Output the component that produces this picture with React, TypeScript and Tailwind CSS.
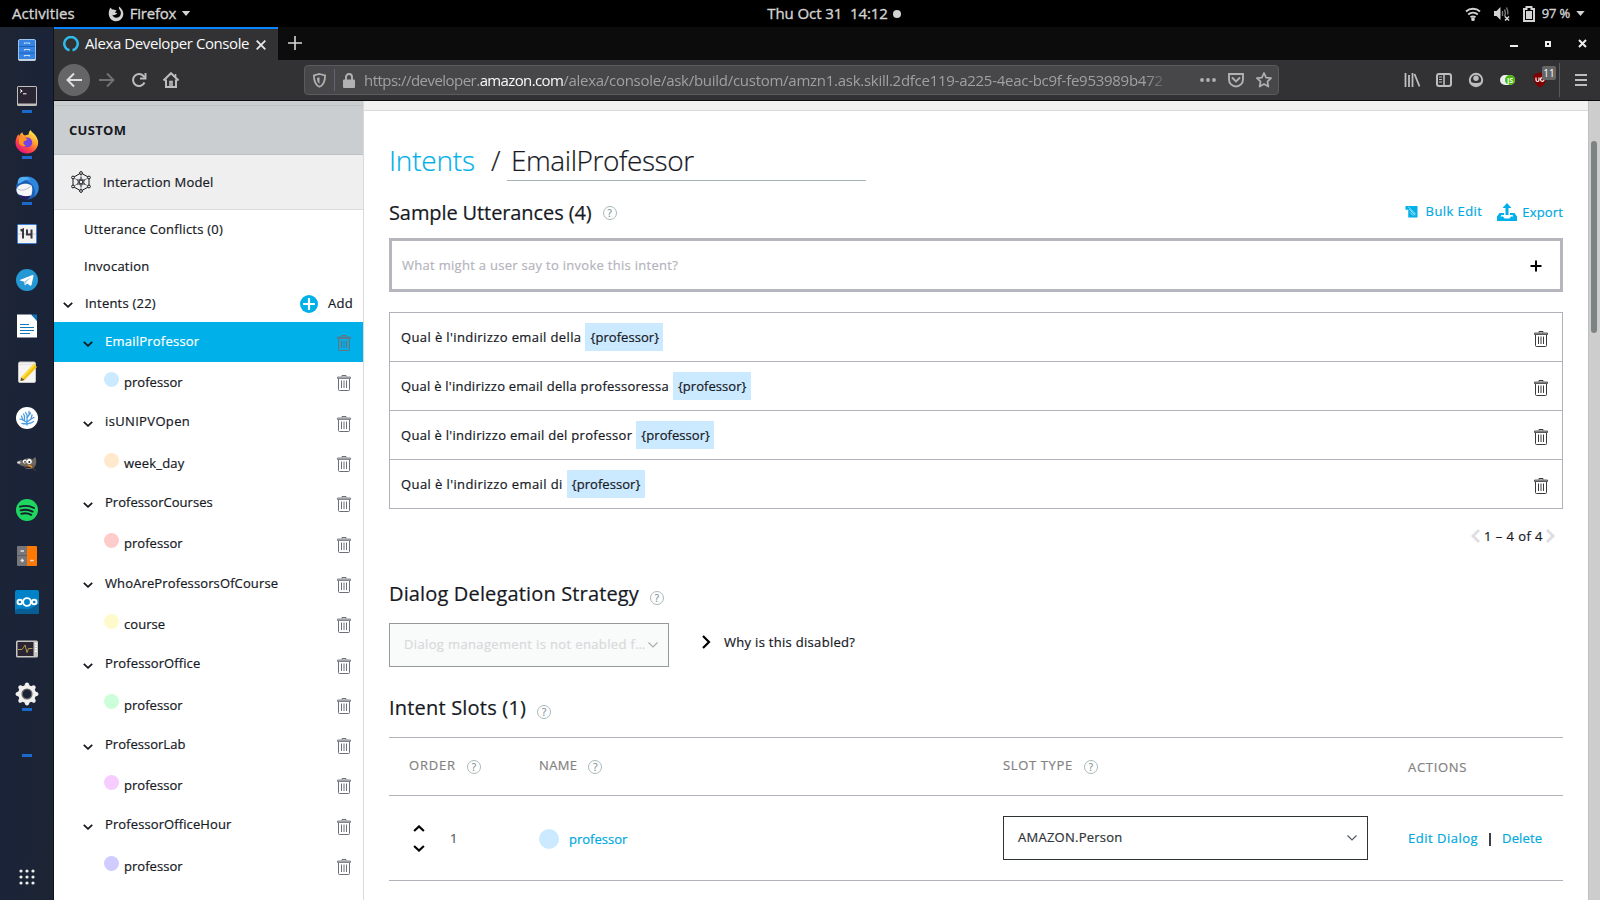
import React from "react";

type P = { className?: string };

/* ---------- small glyphs ---------- */

const Chevron = ({ className = "" }: P) => (
  <svg viewBox="0 0 10 6" className={className} fill="none" stroke="currentColor" strokeWidth="1.8">
    <path d="M0.8 0.8 5 4.8 9.2 0.8" />
  </svg>
);

const ThinChevron = ({ className = "" }: P) => (
  <svg viewBox="0 0 10 6" className={className} fill="none" stroke="currentColor" strokeWidth="1.2">
    <path d="M0.5 0.5 5 5 9.5 0.5" />
  </svg>
);

const PageArrow = ({ className = "" }: P) => (
  <svg viewBox="0 0 9 14" className={`h-[14px] w-[9px] ${className}`} fill="none" stroke="#dedee2" strokeWidth="2.8">
    <path d="M8 1 2 7l6 6" />
  </svg>
);

const Trash = ({ className = "" }: P) => (
  <svg viewBox="0 0 14 16" className={className} fill="none" stroke="currentColor">
    <path d="M5 1.500V.500h4v1" />
    <path d="M.500 2h13v1.500H.500z" strokeWidth=".8" fill="currentColor" fillOpacity=".4" />
    <path d="M1.500 4v10.500q0 1 1 1h9q1 0 1-1V4" />
    <path d="M4.500 5.500v7.500M7 5.500v7.500M9.500 5.500v7.500" strokeWidth="1" />
  </svg>
);

const Help = ({ className = "" }: P) => (
  <span
    className={`flex size-[14px] shrink-0 items-center justify-center rounded-full border border-[#a9bab8] text-[10px] leading-none text-[#879596] ${className}`}
  >
    ?
  </span>
);

/* ---------- dock ---------- */

const Files = () => (
  <svg viewBox="0 0 24 24" className="size-6">
    <rect x="3.5" y="1.5" width="17" height="21" rx="1.5" fill="#3584e4" stroke="#9ec3ea" />
    <path d="M3.5 21.8h17" stroke="#deddda" strokeWidth="1.4" />
    <path d="M4 8.5h16M4 15h16" stroke="#1c62bd" />
    <path d="M9.500 6V5h5v1M9.500 12.500v-1h5v1M9.500 18.500v-1h5v1" fill="none" stroke="#c5dcf5" strokeWidth="1.200" />
  </svg>
);
const Terminal = () => (
  <svg viewBox="0 0 24 24" className="size-6">
    <rect x="2" y="2" width="20" height="20" rx="1.5" fill="#c0bfbc" />
    <rect x="3" y="3" width="18" height="16.500" fill="#2a2433" />
    <path d="m5 5.500 2.200 1.500L5 8.500M8 9.800h3.500" fill="none" stroke="#fff" strokeWidth="1" />
  </svg>
);
const Firefox = () => (
  <svg viewBox="0 0 24 24" className="size-6">
    <defs>
      <linearGradient id="fx" x1=".85" y1=".05" x2=".25" y2=".95">
        <stop offset="0" stopColor="#fff44f" />
        <stop offset=".4" stopColor="#ffa030" />
        <stop offset=".7" stopColor="#ff4a45" />
        <stop offset="1" stopColor="#e2157a" />
      </linearGradient>
    </defs>
    <path
      d="M15.500 0c.8 2 3 3 5 5.500 1.600 2 3 5 2.600 8C22.500 19.500 17.800 23.500 12 23.500S.5 19 .5 12.800C.5 9 2 6 3.500 4c0 1 .3 1.600.8 2C5 4 6.500 2.800 7.500 2.300c0 2 1.200 2.900 2.500 3.200 1.500-.8 3-.7 3.500-.5C13.500 3 14.300 1.200 15.500 0Z"
      fill="url(#fx)"
    />
    <circle cx="12.200" cy="12.500" r="5" fill="#7542e5" />
    <path d="M4 8c3-1.500 6-.5 8.500 1.500C11 10.800 9 10.500 8.500 12c-.5 2 1.500 3.500 3 3.500-3 1.500-6.500.5-7.500-2.500Z" fill="#ff9420" />
  </svg>
);
const Thunderbird = () => (
  <svg viewBox="0 0 24 24" className="size-6">
    <circle cx="12.300" cy="12" r="11.400" fill="#1b5fb5" />
    <path d="M6 2.500C12-1 20 1 23 8c1.500 5 0 10-4 13 1.500-4 1-7 0-9.500C17 7 12 4 6 2.500Z" fill="#2f86dd" />
    <path d="M5 1.500C9 0 13 1 16 4c-3-1-6 0-9 2L3 8C2.500 5 3 3 5 1.500Z" fill="#54aef5" />
    <path d="M1.500 13c1-3 4-4.500 6.500-5 3-.5 6-.2 8.500 1.500 1.500 3 .5 8-.5 10.500-4 1.500-8 .5-13-2C1.800 16.500 1.300 14.500 1.500 13Z" fill="#f6f6f8" />
    <path d="M2.500 12.500c3 2.500 7 2.500 13-2" fill="none" stroke="#b6bccb" />
    <path d="M3.500 18.500c4 1.800 8.500 2.200 12.500.8-1 2-2.500 3.200-4 4.200-3.500 0-6.500-2-8.500-5Z" fill="#27195d" />
  </svg>
);
const Calendar = () => (
  <svg viewBox="0 0 24 24" className="size-6">
    <rect x="2.500" y="2.500" width="19" height="19" rx="1" fill="#f2f2f0" stroke="#3d7fd9" />
    <path d="M3 12h18" stroke="#cfcfcf" />
    <path d="M5.500 8.500 8 7.500v9M12 7.500v5h5.500M16.500 7.500v9" fill="none" stroke="#3a3742" strokeWidth="2" />
  </svg>
);
const Telegram = () => (
  <svg viewBox="0 0 24 24" className="size-6">
    <circle cx="12" cy="12" r="11" fill="#2498d4" />
    <path d="m4.800 12 12.700-5c.7-.2 1.100.1 1 .9L16.500 17c-.2.8-.7 1-1.400.6l-3-2.200-1.600 1.600c-.5.500-.9.200-.9-.4l-.3-2.800-4.200-1.300c-.6-.2-.7-.4-.3-.5Z" fill="#fff" />
    <path d="m9.400 13.600 7-4.800-5.200 5.400-.4 2.600Z" fill="#a9cbe0" />
  </svg>
);
const Writer = () => (
  <svg viewBox="0 0 24 24" className="size-6">
    <path d="M2 .5h14.500l5.500 6V23.500H2Z" fill="#fff" />
    <path d="M16 .5h6v6.500Z" fill="#1272b5" />
    <path d="M5 10.500h9M5 13.500h14M5 16.500h14M5 19.500h10" stroke="#1377bd" strokeWidth="1.200" />
  </svg>
);
const Editor = () => (
  <svg viewBox="0 0 24 24" className="size-6">
    <rect x="3.500" y="2" width="17" height="20.500" rx="1.500" fill="#f6f5f4" stroke="#c9c7c3" />
    <path d="M4.500 4.500h15" stroke="#d0cecb" strokeDasharray="1 1" />
    <path d="m6 17.500 13-14 3 3.500L9.500 20 5.500 21Z" fill="#f5c211" />
    <path d="m6 17.500 13-14 1.200 1.400L7.300 18.800Z" fill="#f9e04e" />
    <path d="m6 17.500 3.500 2.500-4 1Z" fill="#5b5140" />
  </svg>
);
const Coral = () => (
  <svg viewBox="0 0 24 24" className="size-6">
    <circle cx="12" cy="12" r="11" fill="#fff" />
    <g fill="none" stroke="#4a9be0" strokeWidth="1.300" strokeLinecap="round">
      <path d="M12 19V9l-1.500-2.500M12 12l2-3V5.500M12 16l4-3 1-4M16 13l3-1.500M12 16.500 8 14 6.500 10M8 14l-3-1M12 18l4-1 2.500-1.500M12 18l-5-.5M9.500 14.500V10L8.500 8M14 9l1.500-2" />
    </g>
  </svg>
);
const Gimp = () => (
  <svg viewBox="0 0 24 24" className="size-6">
    <path d="M4 8.500c2-1 3-.5 5 .2C9.500 5.500 15.500 5 17.500 7.500c1.500-2 3-2.500 3.300-2 .8 4 .5 7-.8 9-2.500 3.300-9.500 3.500-12 0L4 12.500Z" fill="#6d675f" />
    <circle cx="9.800" cy="9.500" r="2" fill="#fff" />
    <circle cx="14.300" cy="9.500" r="2.500" fill="#fff" />
    <circle cx="10" cy="9.800" r=".9" fill="#222" />
    <circle cx="14.300" cy="9.900" r="1" fill="#222" />
    <ellipse cx="3.800" cy="10.500" rx="1.800" ry="1.300" fill="#d9d9d9" />
    <path d="M7.500 14.500c4 1.500 8 1 11-.5" stroke="#2b2622" strokeWidth="1.300" fill="none" />
    <path d="m13 13 5 2.500" stroke="#e58b28" strokeWidth="1.600" />
    <path d="m17.500 14.800 4.500 5.200-5-3.600Z" fill="#4b4238" />
  </svg>
);
const Spotify = () => (
  <svg viewBox="0 0 24 24" className="size-6">
    <circle cx="12" cy="12" r="11" fill="#1ed760" />
    <path d="M5 8.700c5-1.400 10-.9 14 1.300M5.600 12.400c4.400-1.200 8.400-.7 12 1.200M6.200 15.800c3.700-1 7-.6 10 1" fill="none" stroke="#16202b" strokeWidth="1.900" strokeLinecap="round" />
  </svg>
);
const Calculator = () => (
  <svg viewBox="0 0 24 24" className="size-6">
    <path d="M3 2h9v20H3a1 1 0 0 1-1-1V3a1 1 0 0 1 1-1Z" fill="#77767b" />
    <path d="M12 2h9a1 1 0 0 1 1 1v18a1 1 0 0 1-1 1h-9Z" fill="#ff7800" />
    <path d="M2 11.500h10" stroke="#5e5c64" />
    <path d="M5.500 7h3.500M5.500 16.500h3.500M7.250 14.700v3.600M15.200 16.500h3.500" stroke="#e2e1e4" strokeWidth="1.400" />
  </svg>
);
const Nextcloud = () => (
  <svg viewBox="0 0 24 24" className="size-6">
    <rect width="24" height="24" rx="2" fill="#0082c9" />
    <path d="M0 20c6-3 10 0 14-1s7-5 10-5v8a2 2 0 0 1-2 2H2a2 2 0 0 1-2-2Z" fill="#075d94" />
    <g fill="none" stroke="#fff" strokeWidth="1.900">
      <circle cx="12" cy="12" r="3.900" />
      <circle cx="4.800" cy="12" r="2.300" />
      <circle cx="19.200" cy="12" r="2.300" />
    </g>
  </svg>
);
const Monitor = () => (
  <svg viewBox="0 0 24 24" className="size-6">
    <rect x="1" y="4.500" width="22" height="17" rx="1.500" fill="#c9c7c4" />
    <rect x="2.500" y="6" width="16" height="14" fill="#2a2433" />
    <path d="M3 13.500h4l1.500-2 1.500-2.500 2 7.500 1.500-4h4" fill="none" stroke="#b9a84e" strokeWidth=".9" />
    <path d="M21 7v10" stroke="#fff" strokeWidth="1.800" strokeDasharray="1.500 1" />
  </svg>
);
const teeth = [0, 45, 90, 135, 180, 225, 270, 315];
const Gear = () => (
  <svg viewBox="0 0 24 24" className="size-6">
    <g fill="#f1f0ee">
      {teeth.map((a) => (
        <path key={a} d="M9 5 10.200 1.500q1.800-2 3.600 0L15 5Z" transform={`rotate(${a} 12 12)`} />
      ))}
    </g>
    <circle cx="12" cy="12" r="6.900" fill="none" stroke="#f1f0ee" strokeWidth="4" />
    <circle cx="12" cy="12" r="5" fill="none" stroke="#6b6a69" strokeWidth="1.200" />
  </svg>
);

const dock: { Icon?: () => React.JSX.Element; running?: boolean }[] = [
  { Icon: Files },
  { Icon: Terminal, running: true },
  { Icon: Firefox, running: true },
  { Icon: Thunderbird, running: true },
  { Icon: Calendar },
  { Icon: Telegram },
  { Icon: Writer },
  { Icon: Editor },
  { Icon: Coral },
  { Icon: Gimp },
  { Icon: Spotify },
  { Icon: Calculator },
  { Icon: Nextcloud },
  { Icon: Monitor },
  { Icon: Gear, running: true },
  { running: true },
];

const Dock = () => (
  <nav className="flex w-[54px] shrink-0 flex-col items-center border-r border-[#0d1420] bg-linear-to-br from-[#1e2634] via-[#1a2338] to-[#1d2533]">
    {dock.map(({ Icon, running }, i) => (
      <div key={i} className="flex h-[46px] w-full flex-col items-center pt-[11px]">
        <span className="size-6">{Icon && <Icon />}</span>
        {running && <span className="mt-[2px] h-[3px] w-[10px] bg-[#1b6acb]" />}
      </div>
    ))}
    <svg viewBox="0 0 16 16" className="mt-auto mb-[15px] size-4" fill="#eeeeec">
      {[2, 8, 14].flatMap((y) => [2, 8, 14].map((x) => <circle key={`${x}-${y}`} cx={x} cy={y} r="1.600" />))}
    </svg>
  </nav>
);

/* ---------- desktop top bar ---------- */

const TopBar = () => (
  <header className="grid h-[27px] shrink-0 grid-cols-[1fr_auto_1fr] items-center bg-black text-[15px] text-[#d3d3d3] [-webkit-text-stroke:0.35px]">
    <div className="flex items-center pl-3">
      <span className="tracking-[0.1px]">Activities</span>
      <svg viewBox="0 0 16 16" className="ml-[33px] size-4" fill="currentColor">
        <path d="M2.500 1.500C1 4 .600 6 .800 8.500 1.200 12.500 4.500 15.300 8 15.300c4.200 0 7.300-3.200 7.300-7.200 0-2.300-.8-4.300-2.600-6.100-.5-.6-1.200-1-1.700-1.500-.3 1.700.2 2.600 1 3.800.9 1.400 1.200 3.200.5 4.800-.8 1.800-2.500 2.900-4.400 2.700-1.900-.1-3.400-1.400-3.600-3 .8.5 1.800.5 2.700 0 .8-.5 1.300-.9 2-.7-.2-1-1.200-1.400-2.200-1.300.2-1 1.300-1.500 1.600-2.500-1.200.2-2-.2-2.700-.8-.9.100-1.500-.1-2.200-.600C3.300 2.600 2.800 2.100 2.500 1.500Z" />
      </svg>
      <span className="ml-1.5 tracking-[-0.25px]">Firefox</span>
      <svg viewBox="0 0 10 6" className="ml-[5px] h-[5px] w-[10px]" fill="currentColor">
        <path d="M0 0h10L5 6Z" />
      </svg>
    </div>
    <div className="flex items-center pl-[68px]">
      <span className="tracking-[-0.08px] whitespace-pre">Thu Oct 31  14:12</span>
      <span className="ml-[5px] size-2 rounded-full bg-[#d3d3d3]" />
    </div>
    <div className="flex items-center justify-end pr-[15px]">
      <svg viewBox="0 0 16 14" className="h-[14px] w-4" fill="none" stroke="currentColor" strokeWidth="1.900">
        <path d="M1 4.500c4-3.600 10-3.600 14 0M3.200 7.500c2.800-2.400 6.800-2.400 9.600 0M5.500 10.300c1.600-1.200 3.400-1.200 5 0" />
        <circle cx="8" cy="12.200" r=".9" fill="currentColor" />
      </svg>
      <svg viewBox="0 0 18 16" className="ml-3 h-4 w-[18px]" fill="none">
        <path d="M1 5h2.500l4-4v13l-4-4H1Z" fill="currentColor" />
        <path d="M9.500 5v5M11.500 3.500c1 2 1 5 0 7M13.500 1.500c1.500 3 1.700 5 1.300 7" stroke="#777" strokeWidth="1.400" />
        <path d="m12 10.500 4 4m0-4-4 4" stroke="currentColor" strokeWidth="1.600" />
      </svg>
      <svg viewBox="0 0 12 16" className="ml-[12px] h-4 w-3">
        <path d="M1 3h2.500V1h5v2H11v12H1Z" fill="none" stroke="currentColor" strokeWidth="2" />
        <path d="M3 5h6v8H3Z" fill="currentColor" />
      </svg>
      <span className="ml-[7px] text-[13px] tracking-[-0.2px]">97 %</span>
      <svg viewBox="0 0 10 6" className="ml-[6px] h-[5px] w-[9px]" fill="currentColor">
        <path d="M0 0h10L5 6Z" />
      </svg>
    </div>
  </header>
);

/* ---------- browser chrome ---------- */

const TabStrip = () => (
  <div className="flex h-[33px] shrink-0 bg-[#0c0c0d]">
    <div className="flex w-[224px] items-center border-t-2 border-[#0a84ff] bg-[#323234] pl-[9px] text-[15px] text-[#f9f9fa]">
      <svg viewBox="0 0 16 16" className="-mt-px size-4" fill="none" stroke="#2ebcee" strokeWidth="2.500">
        <path d="M6.500 14.200A6.700 6.700 0 1 1 9.500 14.200" />
      </svg>
      <span className="-mt-[2px] ml-1.5 w-[164px] tracking-[-0.41px] whitespace-nowrap">Alexa Developer Console</span>
      <svg viewBox="0 0 10 10" className="ml-[7px] size-[10px]" stroke="#e8e8ea" strokeWidth="1.800">
        <path d="m.7.700 8.600 8.600M9.300.700.7 9.300" />
      </svg>
    </div>
    <svg viewBox="0 0 14 14" className="mt-[9px] ml-[10px] size-[14px]" stroke="#d8d8d9" strokeWidth="1.600">
      <path d="M7 0v14M0 7h14" />
    </svg>
    <div className="ml-auto flex items-center gap-[25px] pr-[13px] text-[#eeeeec]">
      <span className="mt-[5px] h-[2px] w-2 bg-current" />
      <span className="ml-[2px] size-[6px] border-2 border-current" />
      <svg viewBox="0 0 9 9" className="ml-[2px] size-[9px]" stroke="currentColor" strokeWidth="2">
        <path d="m1 1 7 7M8 1 1 8" />
      </svg>
    </div>
  </div>
);

const Toolbar = () => (
  <div className="flex h-[41px] shrink-0 items-center border-b border-[#0c0c0d] bg-[#323234] text-[#bdbdbe]">
    <div className="ml-1 flex size-8 shrink-0 items-center justify-center rounded-full bg-[#656567]">
      <svg viewBox="0 0 16 16" className="size-4" fill="none" stroke="#e0e0e1" strokeWidth="2">
        <path d="M16 8H1.500M8 1.500 1.500 8 8 14.500" />
      </svg>
    </div>
    <svg viewBox="0 0 16 16" className="ml-[9px] size-4" fill="none" stroke="#727274" strokeWidth="1.900">
      <path d="M0 8h14.500M8 1.500 14.500 8 8 14.500" />
    </svg>
    <svg viewBox="0 0 16 16" className="ml-4 size-4" fill="none" stroke="currentColor" strokeWidth="2">
      <path d="M13.500 10.500A6 6 0 1 1 12.500 4L14 5.500" />
      <path d="M14.500 1v5.500H9" strokeWidth="1.900" />
    </svg>
    <svg viewBox="0 0 16 16" className="ml-4 size-4" fill="none" stroke="currentColor" strokeWidth="2">
      <path d="M.5 8.500 8 1.200l7.500 7.300" />
      <path d="M3 7.500V15h10V7.500" />
      <path d="M7 15V9.500h2V15M12.500 2v3" strokeWidth="1.600" />
    </svg>

    <div className="ml-[125px] flex h-[30px] w-[975px] shrink-0 items-center rounded-[4px] border border-[#5b5b5e] bg-[#474749] text-[#b1b1b3]">
      <svg viewBox="0 0 14 16" className="ml-2 h-[15px] w-[13px]" fill="none" stroke="currentColor" strokeWidth="1.900">
        <path d="M7 1 13 2.500c0 6-1 10-6 12.300C2 12.500 1 8.500 1 2.500Z" />
        <path d="M7 4.500v7C5 10 4.400 8 4.300 5.200Z" fill="currentColor" stroke="none" />
      </svg>
      <span className="ml-2 h-[22px] w-px bg-[#5f6673]" />
      <svg viewBox="0 0 12 15" className="ml-2 h-[15px] w-3" fill="currentColor">
        <path d="M1 6.500h10a1 1 0 0 1 1 1V14a1 1 0 0 1-1 1H1a1 1 0 0 1-1-1V7.500a1 1 0 0 1 1-1Z" />
        <path d="M3 7V4a3 3 0 0 1 6 0v3" fill="none" stroke="currentColor" strokeWidth="1.900" />
      </svg>
      <div className="ml-[9px] w-[814px] mask-r-from-[782px] mask-r-to-[806px] text-[15px] whitespace-nowrap text-[#a0a0a2]">
        <span className="tracking-[-0.53px]">https://developer.</span>
        <span className="tracking-[-0.63px] text-[#f9f9fa]">amazon.com</span>
        <span className="tracking-[-0.27px]">/alexa/console/ask/build/custom/amzn1.ask.skill.2dfce119-a225-4eac-bc9f-fe953989b472</span>
      </div>
      <svg viewBox="0 0 16 4" className="ml-[22px] h-1 w-4" fill="currentColor">
        <circle cx="2" cy="2" r="1.900" />
        <circle cx="8" cy="2" r="1.900" />
        <circle cx="14" cy="2" r="1.900" />
      </svg>
      <svg viewBox="0 0 16 15" className="ml-3 h-[15px] w-4" fill="none" stroke="currentColor" strokeWidth="1.900">
        <path d="M1 1h14v5.500a7 7 0 0 1-14 0Z" />
        <path d="m4.500 5 3.500 3.500L11.500 5" strokeLinecap="round" />
      </svg>
      <svg viewBox="0 0 16 16" className="ml-3 size-4" fill="none" stroke="currentColor" strokeWidth="1.700" strokeLinejoin="round">
        <path d="m8 1 2.100 4.600 5 .6-3.700 3.400 1 5L8 12.100l-4.400 2.500 1-5L.9 6.200l5-.6Z" />
      </svg>
    </div>

    <svg viewBox="0 0 16 16" className="ml-[125px] size-4" stroke="currentColor" strokeWidth="1.800">
      <path d="M1.500 1v14M5 3v12M8.500 1v14M10.500 2l5 12.500" />
    </svg>
    <svg viewBox="0 0 16 16" className="ml-4 size-4" fill="none" stroke="currentColor">
      <rect x="1" y="2" width="14" height="12" rx="2" strokeWidth="2" />
      <path d="M8 2v12" strokeWidth="1.600" />
      <path d="M3 5h3M3 7.500h3M3 10h3" strokeWidth="1.100" />
    </svg>
    <svg viewBox="0 0 16 16" className="ml-4 size-4" fill="none" stroke="currentColor" strokeWidth="2">
      <circle cx="8" cy="8" r="6.200" />
      <circle cx="8" cy="6.300" r="2.700" fill="currentColor" stroke="none" />
      <path d="M3 9.500c1.500 2 8.500 2 10 0l-.5 2.500-4.500 2.500L3.500 12Z" fill="currentColor" stroke="none" />
    </svg>
    <div className="ml-4 flex h-4 w-4 items-center">
      <div className="flex h-[10px] w-[15px] items-center justify-end rounded-full bg-[#ededed]">
        <span className="flex size-[10px] shrink-0 items-center justify-center rounded-full bg-[#48b90b] text-[7px] leading-none font-bold text-white">JS</span>
      </div>
    </div>
    <div className="relative ml-[17px] h-4 w-[14px]">
      <svg viewBox="0 0 14 16" className="h-4 w-[14px]">
        <path d="M7 .500 13.500 2.500c0 6-1 9.500-6.500 13C1.500 12 .5 8.500.5 2.500Z" fill="#800000" />
        <path d="M3 5.500v2.500q0 1.500 1.500 1.500T6 8V5.500" fill="none" stroke="#fff" strokeWidth="1.200" />
        <circle cx="9.300" cy="7.500" r="1.800" fill="none" stroke="#fff" strokeWidth="1.200" />
      </svg>
      <span className="absolute -top-[6px] left-[9px] flex h-[14px] w-[14px] items-center justify-center rounded-[2px] bg-[#666] text-[10px] leading-none text-white">
        11
      </span>
    </div>
    <span className="ml-[12px] h-[34px] w-px bg-[#59595b]" />
    <svg viewBox="0 0 12 12" className="ml-[15px] h-3 w-3" stroke="currentColor" strokeWidth="2">
      <path d="M0 1h12M0 6h12M0 11h12" />
    </svg>
  </div>
);

/* ---------- sidebar ---------- */

const intents = [
  { name: "EmailProfessor", track: "tracking-[0.23px]", slot: "professor", dot: "bg-[#cceaff]", active: true },
  { name: "isUNIPVOpen", track: "tracking-[0.35px]", slot: "week_day", slotTrack: "tracking-[0.2px]", dot: "bg-[#ffe9cc]" },
  { name: "ProfessorCourses", track: "tracking-[0.04px]", slot: "professor", dot: "bg-[#ffcccc]" },
  { name: "WhoAreProfessorsOfCourse", track: "tracking-[0.12px]", slot: "course", dot: "bg-[#fffacc]" },
  { name: "ProfessorOffice", track: "tracking-[0.1px]", slot: "professor", dot: "bg-[#ccffd9]" },
  { name: "ProfessorLab", track: "tracking-[0.02px]", slot: "professor", dot: "bg-[#f7ccff]" },
  { name: "ProfessorOfficeHour", track: "tracking-[0.1px]", slot: "professor", dot: "bg-[#d1ccff]" },
];

const Sidebar = () => (
  <aside className="flex w-[310px] shrink-0 flex-col border-r border-[#d9d9d9] bg-white text-[13px] text-[#16191f]">
    <div className="h-[5px] border-b border-[#bdc3c3] bg-[#caced0]" />
    <div className="flex h-[49px] items-center border-b border-[#bdc3c3] bg-[#caced0] pt-[2px] pl-[15px] font-bold tracking-[0.3px] [-webkit-text-stroke:0]">CUSTOM</div>
    <div className="flex h-[55px] items-center border-b border-[#dcdcdc] bg-[#efefef] pl-4">
      <svg viewBox="0 0 22 22" className="size-[22px]" fill="#efefef" stroke="#16191f" strokeWidth="1">
        <path d="M11 2v18M3 6.500l16 9M19 6.500l-16 9M7 8.700h8l-4 7ZM7 13.300h8l-4-7Z" fill="none" strokeWidth=".5" />
        <path d="M11 2 19 6.500v9L11 20l-8-4.500v-9Z" fill="none" />
        <circle cx="11" cy="2" r="1.400" />
        <circle cx="19" cy="6.500" r="1.400" />
        <circle cx="19" cy="15.500" r="1.400" />
        <circle cx="11" cy="20" r="1.400" />
        <circle cx="3" cy="15.500" r="1.400" />
        <circle cx="3" cy="6.500" r="1.400" />
        <circle cx="11" cy="11" r="1.900" />
      </svg>
      <span className="mt-px ml-[11px] tracking-[0.18px]">Interaction Model</span>
    </div>
    <div className="flex h-[38px] items-center pt-px pl-[30px] tracking-[0.22px]">Utterance Conflicts (0)</div>
    <div className="flex h-[37px] items-center pl-[30px] tracking-[0.25px]">Invocation</div>
    <div className="flex h-[37px] items-center pr-[10px] pl-[9px]">
      <Chevron className="mt-[3px] h-[6px] w-[10px]" />
      <span className="ml-[12px] tracking-[0.22px]">Intents (22)</span>
      <svg viewBox="0 0 18 18" className="ml-auto size-[18px]">
        <circle cx="9" cy="9" r="9" fill="#00b0e8" />
        <path d="M9 3v12M3 9h12" stroke="#fff" strokeWidth="2.200" />
      </svg>
      <span className="ml-[10px] tracking-[0.3px]">Add</span>
    </div>
    {intents.map((it) => (
      <div key={it.name}>
        <div className={`flex h-[40.3px] items-center pr-[12px] pl-[29px] ${it.active ? "bg-[#00b0e8]" : ""}`}>
          <Chevron className="mt-[3px] h-[6px] w-[10px] text-[#16191f]" />
          <span className={`-mt-px ml-[12px] ${it.track} ${it.active ? "text-white" : ""}`}>{it.name}</span>
          <Trash className="mt-[2px] ml-auto h-4 w-[14px] text-[#6c6e78]" />
        </div>
        <div className="flex h-[40.3px] items-center pr-[12px] pl-[50px]">
          <span className={`-mt-[6px] size-[15px] rounded-full ${it.dot}`} />
          <span className={`mt-px ml-[5px] ${it.slotTrack ?? "tracking-[0.04px]"}`}>{it.slot}</span>
          <Trash className="mt-[2px] ml-auto h-4 w-[14px] text-[#6c6e78]" />
        </div>
      </div>
    ))}
  </aside>
);

/* ---------- main panel ---------- */

const utterances = [
  { text: "Qual è l'indirizzo email della", track: "tracking-[0.39px]" },
  { text: "Qual è l'indirizzo email della professoressa", track: "tracking-[0.24px]" },
  { text: "Qual è l'indirizzo email del professor", track: "tracking-[0.3px]" },
  { text: "Qual è l'indirizzo email di", track: "tracking-[0.4px]" },
];

const Main = () => (
  <main className="flex min-w-0 flex-1 flex-col bg-white text-[13px] text-[#16191f]">
    <div className="h-[10px] shrink-0 border-b border-[#d9d9d9] bg-[#f1f1f1]" />
    <div className="flex flex-col pr-[25px] pl-[25px]">
      <div className="flex pt-[29px] text-[28px] leading-[40px] font-light">
        <span className="w-[102px] tracking-[-0.2px] text-[#00b0e8]">Intents</span>
        <span className="w-4">/</span>
        <div className="h-[41px] w-[359px] border-b border-[#a2b3b3] pl-1 tracking-[-0.42px]">EmailProfessor</div>
      </div>

      <div className="mt-[18px] flex h-[26px] items-center">
        <h2 className="mt-[2px] text-[20px] tracking-[-0.1px]">Sample Utterances (4)</h2>
        <Help className="mt-[2px] ml-[11px]" />
        <div className="ml-auto flex items-center text-[#00a9e0]">
          <svg viewBox="0 0 13 13" className="h-3 w-[13px]">
            <path d="M0 0h13v12.500H3V4H0Z" fill="#00b0e8" />
            <path d="m4 3.500 6.500 6.500M3 .8l8 8M5 7l3.500 3.500" stroke="#fff" strokeWidth=".7" />
          </svg>
          <span className="ml-2 tracking-[0.42px]">Bulk Edit</span>
          <svg viewBox="0 0 20 18" className="ml-[15px] h-[18px] w-5" fill="#00b0e8">
            <path d="M10 0 5.500 5h3v7h3V5h3Z" />
            <path d="M0 13.500 2.500 10H7v2H4.500l-1 1.500H6l1.500 2h5l1.500-2h2.500l-1-1.500H13v-2h4.500L20 13.500V18H0Z" />
          </svg>
          <span className="mt-[2px] ml-[5px] tracking-[0.15px]">Export</span>
        </div>
      </div>

      <div className="mt-[13px] flex h-[54px] items-center justify-between border-[3px] border-[#b6b6be] pr-[18px] pl-[10px]">
        <span className="mt-[2px] tracking-[0.29px] text-[#b4b4bd]">What might a user say to invoke this intent?</span>
        <svg viewBox="0 0 12 12" className="mt-[2px] h-3 w-3" stroke="#000" strokeWidth="2">
          <path d="M6 .500v11M.500 6h11" />
        </svg>
      </div>

      <ul className="mt-5 border border-b-0 border-[#b1b1ba]">
        {utterances.map((u) => (
          <li key={u.text} className="flex h-[49px] items-center border-b border-[#b1b1ba] pr-[14px] pl-[11px]">
            <span className={`mt-[2px] ${u.track}`}>{u.text}</span>
            <span className="ml-[4px] flex h-7 w-[78px] items-center bg-[#cceaff] pt-[2px] pl-[5px] tracking-[0.05px]">{"{professor}"}</span>
            <Trash className="mt-[3px] ml-auto h-4 w-[14px] text-[#3a3a3c]" />
          </li>
        ))}
      </ul>

      <div className="mt-[12px] flex h-[30px] items-center justify-end pr-[8px]">
        <PageArrow />
        <span className="mt-[2px] mr-[3px] ml-[4px] tracking-[0.45px]">1 – 4 of 4</span>
        <PageArrow className="rotate-180" />
      </div>

      <div className="mt-[30px] flex h-[26px] items-center">
        <h2 className="text-[20px] tracking-[0.15px]">Dialog Delegation Strategy</h2>
        <Help className="mt-[8px] ml-[11px]" />
      </div>
      <div className="mt-4 flex h-11">
        <div className="flex w-[280px] items-center border border-[#95999a] bg-[#f9fafa] pr-[10px] pl-[14px] text-[#d5dbdb]">
          <span className="tracking-[0.36px] whitespace-nowrap">Dialog management is not enabled f…</span>
          <ThinChevron className="ml-auto h-[6px] w-[10px] shrink-0 text-[#a8adad]" />
        </div>
        <div className="-mt-[6px] flex items-center">
          <svg viewBox="0 0 9 14" className="ml-[33px] h-[14px] w-[9px]" fill="none" stroke="#000" strokeWidth="2.200">
            <path d="m1 1 6 6-6 6" />
          </svg>
          <span className="mt-px ml-[13px] tracking-[0.3px]">Why is this disabled?</span>
        </div>
      </div>

      <div className="mt-[27px] flex h-[26px] items-center">
        <h2 className="mt-[2px] text-[20px] tracking-[0.2px]">Intent Slots (1)</h2>
        <Help className="mt-[9px] ml-[11px]" />
      </div>

      <div className="mt-[17px] grid h-[59px] grid-cols-[130px_464px_405px_1fr] items-center border-y border-[#b1b1ba] text-[#828282]">
        <div className="-mt-[2px] flex items-center pl-5">
          <span className="tracking-[0.8px]">ORDER</span>
          <Help className="mt-[3px] ml-[11px]" />
        </div>
        <div className="-mt-[2px] flex items-center pl-5">
          <span className="tracking-[0.35px]">NAME</span>
          <Help className="mt-[3px] ml-[11px]" />
        </div>
        <div className="-mt-[2px] flex items-center pl-5">
          <span className="tracking-[0.65px]">SLOT TYPE</span>
          <Help className="mt-[3px] ml-[11px]" />
        </div>
        <span className="mt-[2px] pl-5 tracking-[0.7px]">ACTIONS</span>
      </div>
      <div className="grid h-[85px] grid-cols-[130px_464px_405px_1fr] items-center border-b border-[#b1b1ba]">
        <div className="flex items-center pl-6">
          <div className="flex flex-col gap-[13px] text-black">
            <Chevron className="h-[7px] w-3 rotate-180" />
            <Chevron className="h-[7px] w-3" />
          </div>
          <span className="mt-[2px] ml-[25px] text-[#545b64]">1</span>
        </div>
        <div className="mt-[2px] flex items-center pl-5">
          <span className="size-5 rounded-full bg-[#cceaff]" />
          <span className="mt-px ml-[10px] text-[#00a9e0]">professor</span>
        </div>
        <div className="pl-5">
          <div className="flex h-11 w-[365px] items-center justify-between border border-[#2f3437] pr-[10px] pl-[14px] text-[#2f3437]">
            <span className="tracking-[0.25px]">AMAZON.Person</span>
            <ThinChevron className="h-[6px] w-[10px] text-[#545b64]" />
          </div>
        </div>
        <div className="mt-[2px] flex items-center pl-5 whitespace-nowrap text-[#00a9e0]">
          <span className="tracking-[0.5px]">Edit Dialog</span>
          <span className="mr-[11px] ml-[11px] h-[13px] w-[2px] bg-[#3c3f45]" />
          <span className="tracking-[0.15px]">Delete</span>
        </div>
      </div>
    </div>
  </main>
);

export default function App() {
  return (
    <div className="flex h-[900px] w-[1600px] flex-col overflow-hidden font-['Open_Sans','Noto_Sans',sans-serif]">
      <TopBar />
      <div className="flex min-h-0 flex-1">
        <Dock />
        <div className="flex min-w-0 flex-1 flex-col">
          <TabStrip />
          <Toolbar />
          <div className="flex min-h-0 flex-1 [-webkit-text-stroke:0.2px]">
            <Sidebar />
            <Main />
            <div className="w-3 shrink-0 border-l border-[#bfbfbf] bg-[#cdcdcd] pt-10 pl-[2px]">
              <div className="h-[192px] w-[6px] rounded-full bg-[#7d8282]" />
            </div>
          </div>
        </div>
      </div>
    </div>
  );
}
